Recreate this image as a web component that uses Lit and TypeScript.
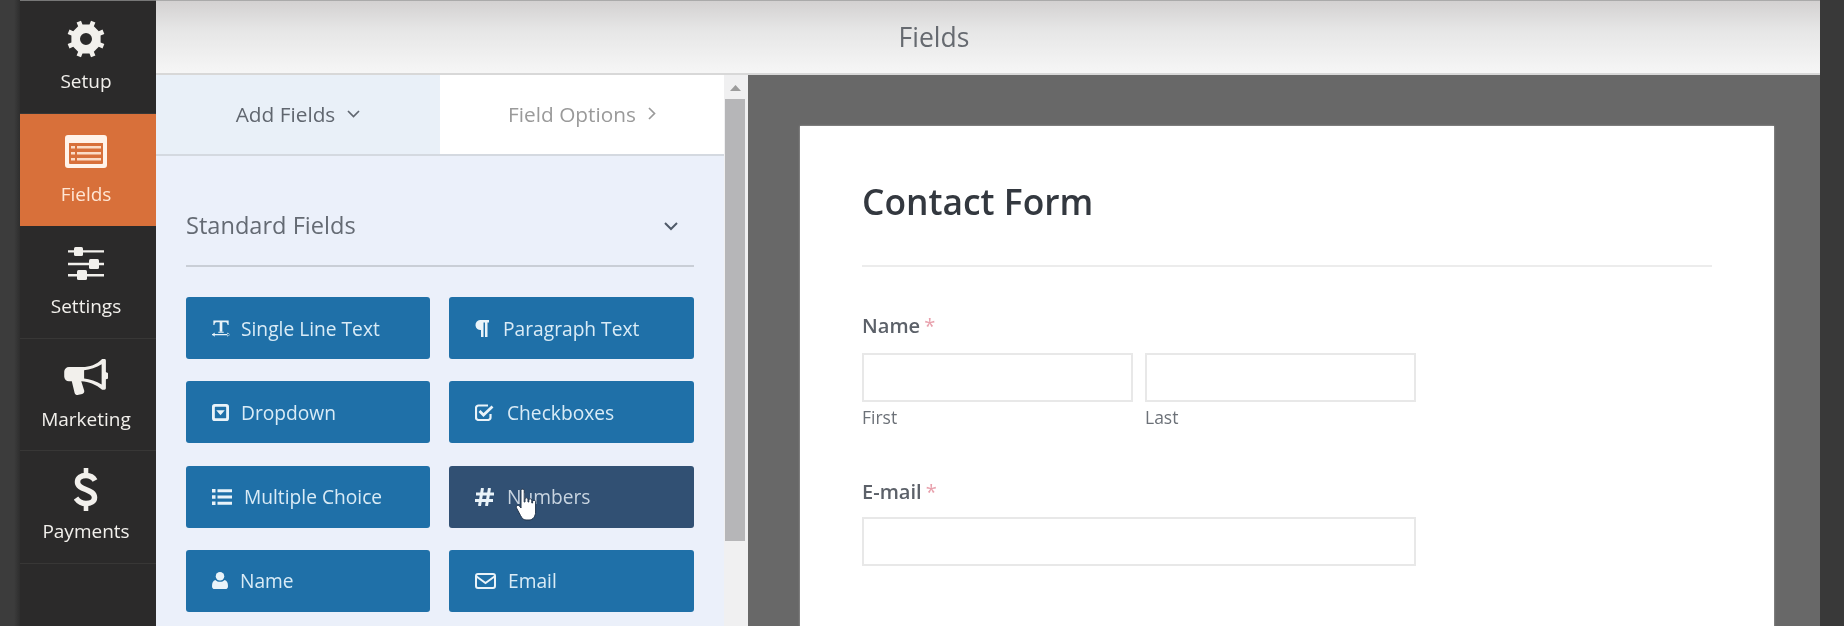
import { LitElement, html, css, svg } from "lit";
import { customElement } from "lit/decorators.js";

function gearPath(cx: number, cy: number, ro: number, rb: number, rh: number, n: number) {
  const pts: string[] = [];
  const step = (Math.PI * 2) / n;
  const p = (r: number, a: number) => `${(cx + r * Math.cos(a)).toFixed(2)} ${(cy + r * Math.sin(a)).toFixed(2)}`;
  for (let i = 0; i < n; i++) {
    const a = i * step - step / 2;
    pts.push(p(rb, a - step * 0.2), p(ro, a - step * 0.16), p(ro, a + step * 0.16), p(rb, a + step * 0.2));
  }
  const outer = "M" + pts.join("L") + "Z";
  const hole = `M${cx - rh} ${cy}a${rh} ${rh} 0 1 0 ${rh * 2} 0a${rh} ${rh} 0 1 0 ${-rh * 2} 0Z`;
  return outer + hole;
}

const icons = {
  gear: svg`<svg class="nav-svg" width="40" height="40" viewBox="0 0 40 40"><path fill="currentColor" fill-rule="evenodd" d=${gearPath(20, 20, 19, 15, 6, 8)}/></svg>`,
  list: svg`<svg class="nav-svg" width="42" height="33" viewBox="0 0 42 33"><path fill="#fff3ea" fill-rule="evenodd" d="M3 0H39a3 3 0 0 1 3 3V30a3 3 0 0 1-3 3H3a3 3 0 0 1-3-3V3a3 3 0 0 1 3-3ZM4 8V28a1 1 0 0 0 1 1H37a1 1 0 0 0 1-1V8Z"/><path fill="#fbdcc6" d="M6 11h4v2.400H6zM12 11h24v2.400H12zM6 17h4v2.400H6zM12 17h24v2.400H12zM6 23h4v2.400H6zM12 23h24v2.400H12z"/></svg>`,
  sliders: svg`<svg class="nav-svg" width="36" height="34" viewBox="0 0 36 34"><path fill="currentColor" d="M0 3.200h36v2.400H0zM0 15.800h36v2.400H0zM0 27h36v2.400H0z"/><rect fill="currentColor" x="6" y="0" width="9" height="9" rx="1.500"/><rect fill="currentColor" x="21" y="12" width="10" height="10" rx="1.500"/><rect fill="currentColor" x="9" y="23" width="10" height="10" rx="1.500"/></svg>`,
  horn: svg`<svg class="nav-svg" width="44" height="36" viewBox="0 0 46 38"><path fill="currentColor" fill-rule="evenodd" d="M40 0h2.500a1.500 1.500 0 0 1 1.500 1.500V14a3.800 3.800 0 0 1 0 7.500V31a1.500 1.500 0 0 1-1.500 1.500H40C34 27 26 24 18 23.500l3 9.500c.6 2-.4 3.500-2 4l-5 1c-1.500 0-2.500-.8-3-2.200L8 23.500H5a5 5 0 0 1-5-5v-5a5 5 0 0 1 5-5H19C27 8.500 34 6 40 0ZM39.500 5.500C34 9 27 11.200 21 11.800V20.700C27 21.300 34 23.500 39.500 27Z"/></svg>`,
  dollar: svg`<svg class="nav-svg" width="24" height="43" viewBox="0 0 24 43"><path fill="none" stroke="currentColor" stroke-width="5.500" d="M21 12.500C19 9 15.500 7.500 12 7.500 7 7.500 3.500 10 3.500 14 3.500 22.500 20.500 20.500 20.500 29.500 20.500 33.500 16.500 35.500 12 35.500 8 35.500 4.500 33.500 2 30"/><path fill="currentColor" d="M9.700 0h4.600v8H9.700zM9.700 35h4.600v8H9.700z"/></svg>`,
  t: svg`<svg class="btn-svg" width="18" height="19" viewBox="0 0 20 20"><path fill="currentColor" d="M1.500 1h17v5h-1.200c-.3-2-.8-3-2-3h-3.800v10.500h-3V3H4.700c-1.200 0-1.700 1-2 3H1.500z"/><path fill="currentColor" d="M7 13.500h6v1.200H7zM0 16h20v1.500H0zM0 16.800 3 14.500v4.600zM20 16.800 17 14.500v4.600z"/></svg>`,
  para: svg`<svg class="btn-svg" width="14" height="17" viewBox="0 0 14 17"><path fill="currentColor" d="M5 0H14V2.500H12.500V17H10V2.500H8.500V17H6V10A5 5 0 0 1 5 0Z"/></svg>`,
  hash: svg`<svg class="btn-svg" width="19" height="18" viewBox="0 0 19 18"><path fill="none" stroke="currentColor" stroke-width="3" d="M7.500 0 4.500 18M14.500 0 11.500 18M1 6H19M0 12.500H18"/></svg>`,
  dropdown: svg`<svg class="btn-svg" width="17" height="17" viewBox="0 0 18 18"><path fill="currentColor" fill-rule="evenodd" d="M3 0h12a3 3 0 0 1 3 3v12a3 3 0 0 1-3 3H3a3 3 0 0 1-3-3V3a3 3 0 0 1 3-3ZM3.500 3a.5.5 0 0 0-.5.5v11c0 .3.200.5.5.5h11a.5.5 0 0 0 .5-.5v-11a.5.5 0 0 0-.5-.5Z"/><path fill="currentColor" d="M4.500 6.500h9L9 12z"/></svg>`,
  check: svg`<svg class="btn-svg" width="19" height="17" viewBox="0 0 19 17"><path fill="none" stroke="currentColor" stroke-width="2.200" d="M15.500 10v3.500a2.500 2.500 0 0 1-2.500 2.500H3.500A2.500 2.500 0 0 1 1 13.500V4a2.500 2.500 0 0 1 2.500-2.500H13"/><path fill="none" stroke="currentColor" stroke-width="2.800" d="M4.500 7 8.500 11 17.500 2.500"/></svg>`,
  bullets: svg`<svg class="btn-svg" width="20" height="16" viewBox="0 0 20 16"><path fill="currentColor" d="M0 0h3.500v3.500H0zM5.500 0.300H20v3H5.500zM0 6.200h3.500v3.500H0zM5.500 6.500H20v3H5.500zM0 12.400h3.500v3.500H0zM5.500 12.700H20v3H5.500z"/></svg>`,
  user: svg`<svg class="btn-svg" width="16" height="17" viewBox="0 0 17 18"><circle fill="currentColor" cx="8.500" cy="4.500" r="4.500"/><path fill="currentColor" d="M3.500 8.500C5 10 6.500 10.400 8.500 10.400S12 10 13.500 8.500C15.800 9.200 17 11.500 17 15c0 2-1 3-2.800 3H2.800C1 18 0 17 0 15 0 11.500 1.200 9.200 3.500 8.500Z"/></svg>`,
  mail: svg`<svg class="btn-svg" width="21" height="16" viewBox="0 0 21 16"><rect x="1" y="1" width="19" height="14" rx="2" fill="none" stroke="currentColor" stroke-width="2"/><path d="M1.500 3.500 10.500 10 19.500 3.500" fill="none" stroke="currentColor" stroke-width="2"/></svg>`,
};

const fields = [
  { label: "Single Line Text", icon: icons.t, gap: 11 },
  { label: "Paragraph Text", icon: icons.para, gap: 14 },
  { label: "Dropdown", icon: icons.dropdown, gap: 12 },
  { label: "Checkboxes", icon: icons.check, gap: 13 },
  { label: "Multiple Choice", icon: icons.bullets, gap: 12 },
  { label: "Numbers", icon: icons.hash, gap: 13, hover: true },
  { label: "Name", icon: icons.user, gap: 12 },
  { label: "Email", icon: icons.mail, gap: 12 },
];

const nav = [
  { label: "Setup", icon: icons.gear },
  { label: "Fields", icon: icons.list, active: true },
  { label: "Settings", icon: icons.sliders },
  { label: "Marketing", icon: icons.horn },
  { label: "Payments", icon: icons.dollar },
];

@customElement("app-root")
export class AppRoot extends LitElement {
  static styles = css`
    :host {
      display: flex;
      width: 1844px;
      height: 626px;
      overflow: hidden;
      background: #2c2c2c;
      font-family: "Open Sans", "Liberation Sans", sans-serif;
      filter: blur(0.5px);
    }
    .edge-left {
      width: 20px;
      flex: none;
      background: linear-gradient(90deg, #3c3c3c 0 14px, #2e2e2e 20px);
    }
    .edge-right {
      width: 24px;
      flex: none;
      background: #393939;
    }
    .sidebar {
      width: 136px;
      flex: none;
      background: #2b2a2a;
      border-top: 1px solid #777;
      box-sizing: border-box;
    }
    .nav-item {
      height: 112.500px;
      box-sizing: border-box;
      padding-right: 4px;
      display: flex;
      flex-direction: column;
      align-items: center;
      color: #f2f0ec;
      font-size: 19px;
      border-bottom: 1px solid #383736;
    }
    .nav-item.active {
      background: #d8703a;
      color: #fff;
      border-bottom-color: #d8703a;
    }
    .nav-item.active .label { color: #ffe6d4; }
    .nav-icon {
      height: 44px;
      margin-top: 16px;
      display: flex;
      align-items: center;
      justify-content: center;
    }
    .nav-svg { display: block; }
    .label { margin-top: 8px; line-height: 24px; }
    .main {
      flex: 1;
      display: flex;
      flex-direction: column;
      min-width: 0;
    }
    .header {
      height: 75px;
      flex: none;
      box-sizing: border-box;
      padding: 0 108px 1px 0;
      display: flex;
      align-items: center;
      justify-content: center;
      background: linear-gradient(#d3d1d1 0, #e6e6e6 40%, #f6f6f6 100%);
      border-top: 1px solid #aaa;
      border-bottom: 2px solid #d8d8d8;
      font-size: 26.500px;
      color: #666a70;
    }
    .body { flex: 1; display: flex; min-height: 0; }
    .panel { width: 568px; flex: none; background: #ebf0fa; }
    .tabs {
      height: 81px;
      display: grid;
      grid-template-columns: 284px 284px;
      border-bottom: 2px solid #d4d9e0;
      box-sizing: border-box;
      font-size: 20.800px;
    }
    .tab {
      display: flex;
      align-items: center;
      justify-content: center;
      gap: 12px;
      padding-bottom: 2px;
    }
    .tab.add { background: #e9f0f8; color: #60666f; }
    .tab.opts { background: #fff; color: #9a9a9a; }
    .section { padding: 0 30px; }
    .section-head {
      height: 111px;
      box-sizing: border-box;
      padding: 0 16px 0 0;
      display: flex;
      align-items: flex-end;
      justify-content: space-between;
      border-bottom: 2px solid #c9ced6;
      color: #646a73;
      font-size: 23.600px;
      line-height: 30px;
    }
    .section-head > span { margin-bottom: 25px; }
    .section-head svg { margin-bottom: 34px; }
    .grid {
      margin-top: 30px;
      display: grid;
      grid-template-columns: 244px 245px;
      column-gap: 19px;
      row-gap: 22.300px;
    }
    .btn {
      position: relative;
      height: 62px;
      box-sizing: border-box;
      padding-left: 26px;
      display: flex;
      align-items: center;
      background: #1f70a8;
      border-radius: 3px;
      color: #d9ebf6;
      font-size: 19.200px;
    }
    .btn.hover { background: #315073; color: #c8d4e0; }
    .btn-svg { flex: none; display: block; color: #e9f3f9; }
    .hand { position: absolute; left: 66px; top: 22px; }
    .scroll {
      width: 24px;
      flex: none;
      background: #f0f0f1;
      display: flex;
      flex-direction: column;
      align-items: center;
      box-sizing: border-box;
      padding: 10px 2px 0 0;
    }
    .scroll-up { display: block; }
    .thumb { width: 20px; height: 442px; margin-top: 8px; background: #b6b6b8; }
    .canvas {
      flex: 1;
      min-width: 0;
      background: #686868;
      padding: 51px 46px 0 52px;
    }
    .card {
      height: 600px;
      background: #fff;
      padding: 0 62px;
      box-sizing: border-box;
      color: #555b64;
      box-shadow: 0 0 2px #aaa;
    }
    .title-row {
      height: 141px;
      box-sizing: border-box;
      border-bottom: 2px solid #ececec;
      padding-top: 50px;
      font-size: 35.400px;
      font-weight: 600;
      line-height: 50px;
      color: #33383f;
    }
    .field-label { font-size: 20.100px; font-weight: 600; line-height: 26px; color: #5c6169; }
    .req { color: #e8a0ac; margin-left: 4px; font-weight: 400; }
    .name-label { margin-top: 46px; }
    .inputs { margin-top: 14px; display: flex; gap: 12px; }
    .col { width: 271px; }
    .input {
      height: 49px;
      box-sizing: border-box;
      border: 2px solid #e8e8e8;
      background: #fff;
    }
    .sub { font-size: 17.500px; line-height: 20px; margin-top: 5px; color: #6c7178; }
    .email-label { margin-top: 52px; }
    .email-input { margin-top: 12px; width: 554px; }
    .chev { display: block; }
  `;

  render() {
    return html`
      <div class="edge-left"></div>
      <nav class="sidebar">
        ${nav.map(
          (n) => html`<div class="nav-item ${n.active ? "active" : ""}">
            <div class="nav-icon">${n.icon}</div>
            <div class="label">${n.label}</div>
          </div>`
        )}
      </nav>
      <div class="main">
        <div class="header">Fields</div>
        <div class="body">
          <div class="panel">
            <div class="tabs">
              <div class="tab add">
                Add Fields
                <svg class="chev" width="13" height="8" viewBox="0 0 13 8"><path d="M1 1l5.500 5.500L12 1" fill="none" stroke="#60666f" stroke-width="1.700"/></svg>
              </div>
              <div class="tab opts">
                Field Options
                <svg class="chev" width="8" height="13" viewBox="0 0 8 13"><path d="M1 1l5.500 5.500L1 12" fill="none" stroke="#9a9a9a" stroke-width="1.700"/></svg>
              </div>
            </div>
            <div class="section">
              <div class="section-head">
                <span>Standard Fields</span>
                <svg class="chev" width="14" height="9" viewBox="0 0 14 9"><path d="M1 1l6 6 6-6" fill="none" stroke="#4f5a68" stroke-width="2"/></svg>
              </div>
              <div class="grid">
                ${fields.map(
                  (f) => html`<div class="btn ${f.hover ? "hover" : ""}">
                    ${f.icon}
                    <span style="margin-left:${f.gap}px">${f.label}</span>
                    ${f.hover
                      ? html`<svg class="hand" width="26" height="34" viewBox="0 0 26 34"><path fill="#fff" stroke="#22344a" stroke-width="1" d="M6 2.500c0-1.800 3.200-1.800 3.200 0V14h.8v-3c0-1.600 3-1.600 3 0v3h.8v-2c0-1.600 3-1.600 3 0v3h.8v-1.500c0-1.600 3-1.600 3 0V24c0 4-2.500 8-6.500 8H11C8 32 7 30 5.500 27.500L1.500 20C.5 18 3 16.500 4.500 18L6 20Z"/></svg>`
                      : ""}
                  </div>`
                )}
              </div>
            </div>
          </div>
          <div class="scroll">
            <svg class="scroll-up" width="11" height="6" viewBox="0 0 11 6"><path d="M5.500 0 11 6H0z" fill="#9c9c9c"/></svg>
            <div class="thumb"></div>
          </div>
          <div class="canvas">
            <div class="card">
              <div class="title-row">Contact Form</div>
              <div class="field-label name-label">Name<span class="req">*</span></div>
              <div class="inputs">
                <div class="col"><div class="input"></div><div class="sub">First</div></div>
                <div class="col"><div class="input"></div><div class="sub">Last</div></div>
              </div>
              <div class="field-label email-label">E-mail<span class="req">*</span></div>
              <div class="input email-input"></div>
            </div>
          </div>
        </div>
      </div>
      <div class="edge-right"></div>
    `;
  }
}
